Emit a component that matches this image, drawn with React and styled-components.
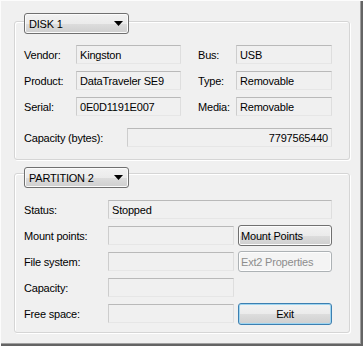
import React from "react";
import styled, { createGlobalStyle, css } from "styled-components";

const Global = createGlobalStyle`
  html, body { margin: 0; padding: 0; background: #f0f0f0; }
  body { font-family: "Liberation Sans", Arial, sans-serif; font-size: 11px; color: #000; }
  * { box-sizing: border-box; }
`;

const Window = styled.div`
  width: 363px;
  height: 346px;
  background: #f0f0f0;
  padding: 21px 13px 0 14px;
  box-shadow: inset 1px 1px 0 #fcfcfc, inset -2px -2px 0 #646464, inset -3px -3px 0 #a0a0a0;
  display: flex;
  flex-direction: column;
  gap: 13px;
  letter-spacing: -0.2px;
`;

const Group = styled.div`
  width: 336px;
  height: ${(p) => p.$h}px;
  border: 1px solid #d5d5d5;
  border-radius: 3px;
  box-shadow: inset 1px 1px 0 #fff, 1px 1px 0 #fff;
  padding: 0 16px 0 9px;
  display: flex;
  flex-direction: column;
`;

const Combo = styled.div`
  width: 105px;
  height: 21px;
  margin-top: ${(p) => p.$mt}px;
  border: 1px solid #707070;
  border-radius: 3px;
  background: linear-gradient(#f2f2f2 0%, #ebebeb 50%, #dddddd 51%, #cfcfcf 100%);
  box-shadow: inset 0 0 0 1px #fbfbfb;
  display: flex;
  align-items: center;
  justify-content: space-between;
  padding: 0 5px 0 4px;
  font-size: 11px;
  flex: none;
`;

const Arrow = styled.svg`
  width: 9px;
  height: 5px;
`;

const Rows = styled.div`
  display: grid;
  grid-template-columns: ${(p) => p.$cols};
  grid-auto-rows: 19px;
  row-gap: ${(p) => p.$gap}px;
  margin-top: ${(p) => p.$mt}px;
  align-items: center;
`;

const Label = styled.div`
  white-space: nowrap;
  grid-column: ${(p) => p.$col || "auto"};
`;

const Field = styled.div`
  height: 19px;
  border: 1px solid;
  border-color: #b9b9b9 #dedede #e6e6e6 #cdcdcd;
  background: #f0f0f0;
  display: flex;
  align-items: center;
  padding: 0 3px;
  white-space: nowrap;
  grid-column: ${(p) => p.$col || "auto"};
  justify-content: ${(p) => (p.$right ? "flex-end" : "flex-start")};
`;

const Button = styled.div`
  height: 21px;
  grid-column: ${(p) => p.$col || "auto"};
  border-radius: 3px;
  display: flex;
  align-items: center;
  padding: 0 2px;
  white-space: nowrap;
  justify-content: ${(p) => (p.$center ? "center" : "flex-start")};
  border: 1px solid #707070;
  background: linear-gradient(#f2f2f2 0%, #ebebeb 50%, #dddddd 51%, #cfcfcf 100%);
  box-shadow: inset 0 0 0 1px #fcfcfc;
  ${(p) =>
    p.$disabled &&
    css`
      border-color: #adb2b5;
      background: #f4f4f4;
      color: #8d8d8d;
      box-shadow: inset 0 0 0 1px #fdfdfd;
    `}
  ${(p) =>
    p.$default &&
    css`
      height: 22px;
      border-color: #3c7fb1;
      box-shadow: inset 0 0 0 1px #9fd5f0;
      background: linear-gradient(#f2f2f2 0%, #ebebeb 50%, #dddddd 51%, #cfcfcf 100%);
    `}
`;

const DropArrow = () => (
  <Arrow viewBox="0 0 9 5">
    <path d="M0 0 H9 L4.5 5 Z" fill="#000" />
  </Arrow>
);

export default function App() {
  return (
    <>
      <Global />
      <Window>
        <Group $h={139}>
          <Combo $mt={-9}>
            <span>DISK 1</span>
            <DropArrow />
          </Combo>
          <Rows $cols="52px 105px 17px 38px 96px" $gap={7} $mt={11}>
            <Label>Vendor:</Label>
            <Field>Kingston</Field>
            <Label $col="4">Bus:</Label>
            <Field>USB</Field>
            <Label>Product:</Label>
            <Field>DataTraveler SE9</Field>
            <Label $col="4">Type:</Label>
            <Field>Removable</Field>
            <Label>Serial:</Label>
            <Field>0E0D1191E007</Field>
            <Label $col="4">Media:</Label>
            <Field>Removable</Field>
          </Rows>
          <Rows $cols="103px 205px" $gap={0} $mt={12}>
            <Label>Capacity (bytes):</Label>
            <Field $right>7797565440</Field>
          </Rows>
        </Group>
        <Group $h={160}>
          <Combo $mt={-7}>
            <span>PARTITION 2</span>
            <DropArrow />
          </Combo>
          <Rows $cols="84px 126px 4px 94px" $gap={7} $mt={12}>
            <Label>Status:</Label>
            <Field $col="2 / 5">Stopped</Field>
            <Label>Mount points:</Label>
            <Field />
            <Button $col="4">Mount Points</Button>
            <Label>File system:</Label>
            <Field />
            <Button $col="4" $disabled>Ext2 Properties</Button>
            <Label>Capacity:</Label>
            <Field />
            <Label $col="1">Free space:</Label>
            <Field />
            <Button $col="4" $center $default>Exit</Button>
          </Rows>
        </Group>
      </Window>
    </>
  );
}
